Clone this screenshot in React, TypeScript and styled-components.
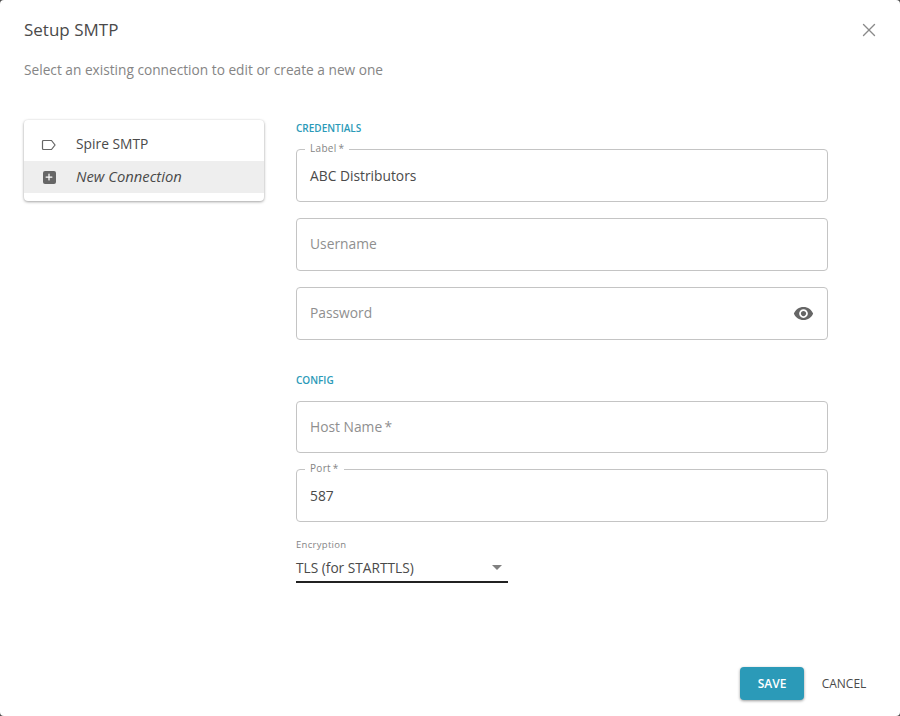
import styled, { createGlobalStyle } from "styled-components";
import { Plus, X } from "lucide-react";
import { MdVisibility } from "react-icons/md";

const GlobalStyle = createGlobalStyle`
  html, body {
    margin: 0;
    padding: 0;
    background: #4d4d4d;
  }
  body {
    font-family: "Open Sans", "Liberation Sans", sans-serif;
  }
`;

const Dialog = styled.div`
  width: 900px;
  height: 716px;
  box-sizing: border-box;
  display: flex;
  flex-direction: column;
  background: #fff;
  border-radius: 4px;
`;

const Header = styled.div`
  display: flex;
  justify-content: space-between;
  align-items: center;
  height: 60px;
  padding: 0 20px 0 24px;
`;

const Title = styled.h2`
  margin: 0;
  font-size: 17px;
  line-height: 60px;
  font-weight: 400;
  color: #4a4a4a;
`;

const CloseButton = styled.button`
  display: flex;
  padding: 0;
  border: 0;
  background: none;
  color: #8a8a8a;
`;

const Subtitle = styled.p`
  margin: 0;
  padding: 0 24px;
  font-size: 13.7px;
  line-height: 20px;
  color: #858585;
`;

const Body = styled.div`
  flex: 1;
  display: flex;
  gap: 32px;
  padding: 40px 24px 0;
`;

const ConnectionList = styled.div`
  width: 240px;
  height: 81px;
  box-sizing: border-box;
  padding: 8px 0;
  border-radius: 4px;
  background: #fff;
  box-shadow: 0 1px 3px rgba(0, 0, 0, 0.35), 0 0 2px rgba(0, 0, 0, 0.08);
`;

const ConnectionRow = styled.div<{ $active?: boolean }>`
  display: flex;
  align-items: center;
  gap: 18px;
  height: ${({ $active }) => ($active ? "32px" : "33px")};
  padding: 0 16px;
  background: ${({ $active }) => ($active ? "#eeeeee" : "transparent")};
`;

const RowIcon = styled.span`
  display: flex;
  width: 18px;
  justify-content: center;
  color: #666;
`;

const RowText = styled.span<{ $italic?: boolean }>`
  padding-bottom: 2px;
  font-size: ${({ $italic }) => ($italic ? "14.8px" : "13.8px")};
  font-style: ${({ $italic }) => ($italic ? "italic" : "normal")};
  color: #4a4a4a;
`;

const PlusBox = styled.span`
  display: flex;
  align-items: center;
  justify-content: center;
  width: 13px;
  height: 13px;
  border-radius: 2px;
  background: #666;
  color: #fff;
`;

const Form = styled.div`
  width: 532px;
  display: flex;
  flex-direction: column;
`;

const SectionTitle = styled.h3<{ $top?: number }>`
  margin: ${({ $top }) => $top ?? 0}px 0 0;
  height: 29px;
  font-size: 10px;
  line-height: 16px;
  font-weight: 600;
  color: #2b9ab8;
  text-transform: uppercase;
`;

const FieldStack = styled.div`
  display: flex;
  flex-direction: column;
  gap: 16px;
`;

const Field = styled.div<{ $short?: boolean }>`
  position: relative;
  display: flex;
  align-items: center;
  justify-content: space-between;
  height: ${({ $short }) => ($short ? "52px" : "53px")};
  box-sizing: border-box;
  padding: 0 13px;
  border: 1px solid #c4c4c4;
  border-radius: 4px;
`;

const FloatingLabel = styled.label`
  position: absolute;
  top: -9px;
  left: 8px;
  padding: 0 5px;
  background: #fff;
  font-size: 10px;
  line-height: 14px;
  letter-spacing: 0.3px;
  color: #858585;
`;

const FieldValue = styled.span<{ $placeholder?: boolean }>`
  padding-bottom: ${({ $placeholder }) => ($placeholder ? "2px" : "0")};
  font-size: 13.8px;
  color: ${({ $placeholder }) => ($placeholder ? "#8f8f8f" : "#4a4a4a")};
`;

const SelectField = styled.div`
  width: 212px;
  margin-top: 16px;
`;

const SelectLabel = styled.label`
  display: block;
  font-size: 9.5px;
  line-height: 14px;
  letter-spacing: 0.3px;
  color: #858585;
`;

const SelectValue = styled.div`
  display: flex;
  align-items: center;
  justify-content: space-between;
  height: 29px;
  box-sizing: border-box;
  margin-top: 2px;
  padding: 0 6px 1px 0;
  border-bottom: 2px solid #212121;
  font-size: 13.7px;
  color: #4a4a4a;
`;

const Caret = styled.span`
  width: 0;
  height: 0;
  border-left: 5px solid transparent;
  border-right: 5px solid transparent;
  border-top: 5px solid #808080;
`;

const Footer = styled.div`
  display: flex;
  justify-content: flex-end;
  align-items: center;
  gap: 9px;
  padding: 0 25px 16px 0;
`;

const SaveButton = styled.button`
  width: 64px;
  height: 33px;
  padding: 0;
  border: 0;
  border-radius: 4px;
  background: #2b9ab8;
  box-shadow: 0 1px 3px rgba(0, 0, 0, 0.4);
  color: #fff;
  font: 600 12px "Open Sans", sans-serif;
`;

const CancelButton = styled.button`
  width: 62px;
  height: 33px;
  padding: 0;
  border: 0;
  background: none;
  color: #4a4a4a;
  font: 400 12px "Open Sans", sans-serif;
`;

const LabelIcon = () => (
  <svg width="16" height="12" viewBox="0 0 16 12" fill="none">
    <path
      d="M2.5 1.5h8l3.5 4.5-3.5 4.5h-8a1 1 0 0 1-1-1v-7a1 1 0 0 1 1-1z"
      stroke="#666"
      strokeWidth="1.2"
    />
  </svg>
);

const App = () => {
  return (
    <>
      <GlobalStyle />
      <Dialog>
        <Header>
          <Title>Setup SMTP</Title>
          <CloseButton>
            <X size={22} strokeWidth={1.5} />
          </CloseButton>
        </Header>
        <Subtitle>Select an existing connection to edit or create a new one</Subtitle>
        <Body>
          <ConnectionList>
            <ConnectionRow>
              <RowIcon>
                <LabelIcon />
              </RowIcon>
              <RowText>Spire SMTP</RowText>
            </ConnectionRow>
            <ConnectionRow $active>
              <RowIcon>
                <PlusBox>
                  <Plus size={10} strokeWidth={3} />
                </PlusBox>
              </RowIcon>
              <RowText $italic>New Connection</RowText>
            </ConnectionRow>
          </ConnectionList>
          <Form>
            <SectionTitle>Credentials</SectionTitle>
            <FieldStack>
              <Field>
                <FloatingLabel>Label{"\u2009"}*</FloatingLabel>
                <FieldValue>ABC Distributors</FieldValue>
              </Field>
              <Field>
                <FieldValue $placeholder>Username</FieldValue>
              </Field>
              <Field>
                <FieldValue $placeholder>Password</FieldValue>
                <MdVisibility size={21} color="#666" />
              </Field>
            </FieldStack>
            <SectionTitle $top={32}>Config</SectionTitle>
            <FieldStack>
              <Field $short>
                <FieldValue $placeholder>Host Name{"\u2009"}*</FieldValue>
              </Field>
              <Field>
                <FloatingLabel>Port{"\u2009"}*</FloatingLabel>
                <FieldValue>587</FieldValue>
              </Field>
            </FieldStack>
            <SelectField>
              <SelectLabel>Encryption</SelectLabel>
              <SelectValue>
                TLS (for STARTTLS)
                <Caret />
              </SelectValue>
            </SelectField>
          </Form>
        </Body>
        <Footer>
          <SaveButton>SAVE</SaveButton>
          <CancelButton>CANCEL</CancelButton>
        </Footer>
      </Dialog>
    </>
  );
};

export default App;
